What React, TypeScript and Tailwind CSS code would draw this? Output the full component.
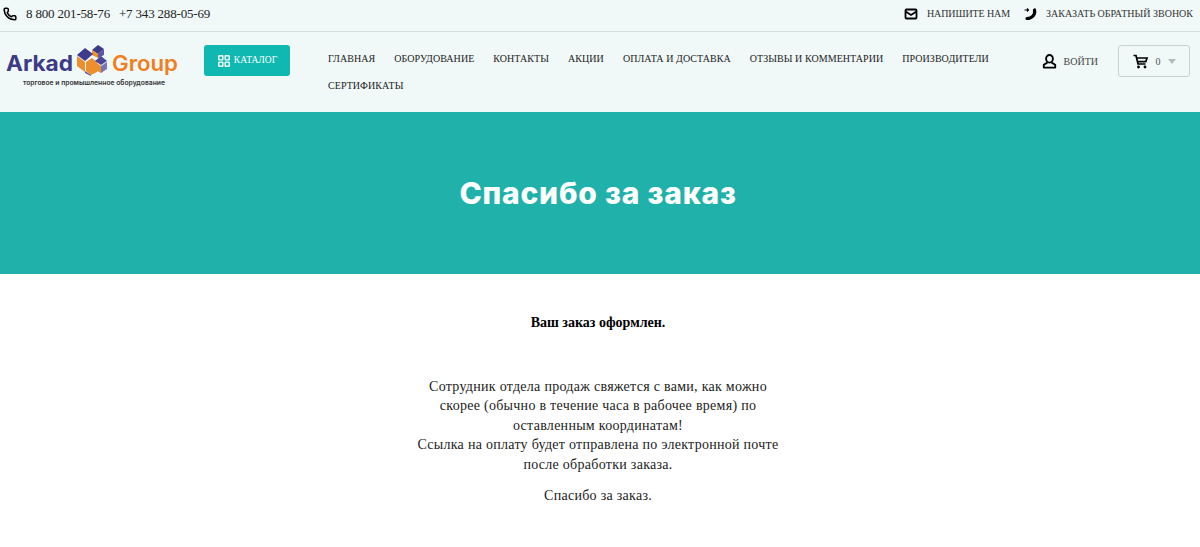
import { LayoutGrid, Phone } from "lucide-react"

const menuItems = [
  "ГЛАВНАЯ",
  "ОБОРУДОВАНИЕ",
  "КОНТАКТЫ",
  "АКЦИИ",
  "ОПЛАТА И ДОСТАВКА",
  "ОТЗЫВЫ И КОММЕНТАРИИ",
  "ПРОИЗВОДИТЕЛИ",
  "СЕРТИФИКАТЫ",
]

function Logo() {
  return (
    <svg width="176" height="46" viewBox="0 0 176 46" className="shrink-0">
      <text x="1" y="27" fontFamily="Inter, sans-serif" fontWeight="700" fontSize="21" textLength="67" lengthAdjust="spacingAndGlyphs" fill="#3d3a86">
        Arkad
      </text>
      <text x="107" y="27" fontFamily="Inter, sans-serif" fontWeight="600" fontSize="21" textLength="66" lengthAdjust="spacingAndGlyphs" fill="#ee7f22">
        Group
      </text>
      {/* cubes */}
      <polygon points="87,6 93,1 99,5 93,10" fill="#3d3a86" />
      <polygon points="87,6 93,10 93,14 87,11" fill="#ee8f2e" />
      <polygon points="93,10 99,5 99,11 93,14" fill="#5a55a5" />
      <polygon points="72,11 80,4 88,10 80,17" fill="#3f3a8c" />
      <polygon points="72,12 80,18 80,28 72,22" fill="#ee8f2e" />
      <polygon points="81,18 87,14 92,18 92,28 86,31 81,27" fill="#ee8f2e" />
      <polygon points="90,17 96,12 102,17 96,21" fill="#4b4696" />
      <polygon points="92,19 96,22 96,29 92,27" fill="#ee8f2e" />
      <polygon points="96,22 102,18 102,25 96,29" fill="#7a74b8" />
      <polygon points="80,27 86,31 86,32 80,29" fill="#5a55a5" />
      <text x="18" y="40.5" fontFamily="Inter, sans-serif" fontWeight="600" fontSize="7" textLength="142" lengthAdjust="spacingAndGlyphs" fill="#333333">
        торговое и промышленное оборудование
      </text>
    </svg>
  )
}

function MailIcon() {
  return (
    <svg width="14" height="14" viewBox="0 0 14 14" fill="none" stroke="#000" strokeWidth="1.8" className="mr-[9px]">
      <rect x="1.5" y="2.5" width="11" height="9" rx="1" />
      <path d="M1.5 4.5 7 8l5.5-3.5" />
    </svg>
  )
}

function CallbackIcon() {
  return (
    <svg width="14" height="14" viewBox="0 0 14 14" fill="none" stroke="#000" className="ml-[14px] mr-[8px]">
      <path d="M10.5 3C11.5 7.5 8 11.5 3 11.5" strokeWidth="3.2" strokeLinecap="round" />
      <path d="M0.5 3h4M3 1.5 4.5 3 3 4.5" strokeWidth="1.2" />
    </svg>
  )
}

function UserIcon() {
  return (
    <svg width="15" height="15" viewBox="0 0 15 15" fill="none" stroke="#000" strokeWidth="1.9" className="mr-[7px]">
      <ellipse cx="7.5" cy="4.8" rx="3.4" ry="3.8" />
      <path d="M5.4 8.6 1.8 10.8V13.6H13.2V10.8L9.6 8.6" strokeLinejoin="round" />
    </svg>
  )
}

function CartIcon() {
  return (
    <svg width="15" height="15" viewBox="0 0 15 15" fill="none" stroke="#000" strokeWidth="1.7" className="mr-[8px]">
      <path d="M0.5 1.5H3L5 10H12.5" />
      <path d="M3.6 4H14L12.8 7.6H4.6" />
      <circle cx="5.5" cy="13" r="1.4" fill="#000" stroke="none" />
      <circle cx="12" cy="13" r="1.4" fill="#000" stroke="none" />
    </svg>
  )
}

export default function App() {
  return (
    <div className="min-h-[547px] bg-white font-['Liberation_Serif',serif] text-[#222]">
      <header className="bg-[#f0f8f8]">
        <div className="flex h-8 items-center justify-between border-b border-[#d5dcdc] pb-1 pl-[3px] pr-[7px]">
          <div className="flex items-center text-[13px] tracking-[-0.18px] text-[#222]">
            <Phone className="mr-[9px] h-[14px] w-[14px] text-black" strokeWidth={2.6} />
            <span>8 800 201-58-76</span>
            <span className="ml-[9px]">+7 343 288-05-69</span>
          </div>
          <div className="flex items-center text-[10px] text-[#333]">
            <MailIcon />
            <span className="tracking-[-0.1px]">НАПИШИТЕ НАМ</span>
            <CallbackIcon />
            <span>ЗАКАЗАТЬ ОБРАТНЫЙ ЗВОНОК</span>
          </div>
        </div>
        <div className="flex h-[80px] items-start">
          <div className="ml-[5px] mt-[12px]">
            <Logo />
          </div>
          <button className="ml-[23px] mt-[13px] flex h-[31px] w-[86px] items-center justify-center rounded-[3px] bg-[#0fb9b1] text-[9.5px] text-white">
            <LayoutGrid className="mr-[3px] h-[14px] w-[14px]" strokeWidth={2.4} />
            КАТАЛОГ
          </button>
          <nav className="ml-[38px] mt-[13px] flex w-[690px] flex-wrap text-[10px] tracking-[0.06px] text-[#222]">
            {menuItems.map((item) => (
              <a key={item} className="mr-[19px] flex h-[27px] items-center">
                {item}
              </a>
            ))}
          </nav>
          <div className="ml-auto mt-[13px] flex items-center pr-[10px]">
            <a className="mr-[20px] flex items-center text-[10px] text-[#444]">
              <UserIcon />
              ВОЙТИ
            </a>
            <div className="flex h-[32px] w-[72px] items-center justify-center rounded-[3px] border-[1.5px] border-[#c8d0d0] text-[10px] text-[#555]">
              <CartIcon />
              0
              <span className="ml-[7px] h-0 w-0 border-x-[4px] border-t-[5px] border-x-transparent border-t-[#b5bcbc]" />
            </div>
          </div>
        </div>
      </header>
      <div className="flex h-[162px] items-center justify-center bg-[#20b2aa] pr-1">
        <h1 className="font-['Inter',sans-serif] text-[30px] font-extrabold tracking-[0.8px] text-white">Спасибо за заказ</h1>
      </div>
      <div className="pr-1">
        <main className="mx-auto w-[380px] pt-[39px] text-center text-[14px] leading-[19.5px] tracking-[0.28px] text-[#222]">
          <p className="font-bold tracking-normal text-black">Ваш заказ оформлен.</p>
          <p className="mt-[44px]">
            Сотрудник отдела продаж свяжется с вами, как можно скорее (обычно в течение часа в рабочее время) по оставленным координатам!
            <br />
            Ссылка на оплату будет отправлена по электронной почте после обработки заказа.
          </p>
          <p className="mt-[12px]">Спасибо за заказ.</p>
        </main>
      </div>
    </div>
  )
}
